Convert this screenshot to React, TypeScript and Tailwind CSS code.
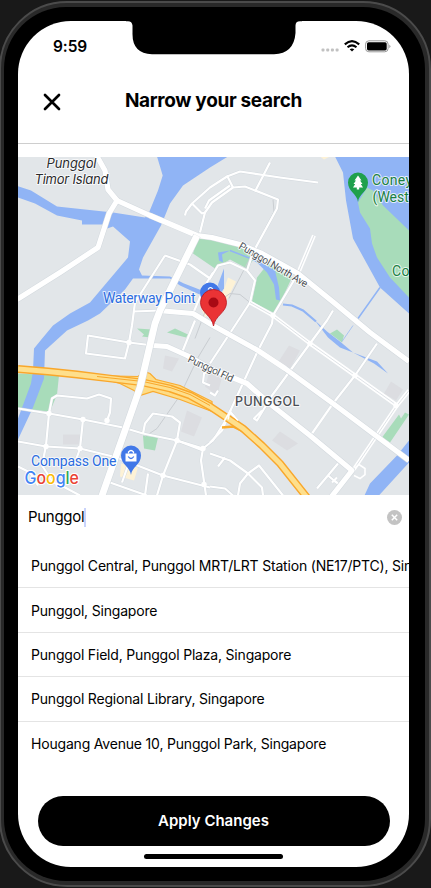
import React from "react";

const WATER = "#90b4f5";
const GREEN = "#a8dcba";

const minorRoads = [
  "M165 255L190 264L210 278L218 265L230 262L247 270L255 280L250 302L273 315",
  "M165 255L135 302L132 325L129 342L125 358L86 353L88 335L129 342L153 345",
  "M133 311L160 310",
  "M185 215L186 211L192 203L210 187L227 176L240 171L280 177L318 182",
  "M192 203L202 213L205 212",
  "M200 232L205 212L212 202L233 187L245 186L278 199L277 208L253 252L247 270",
  "M227 175L233 187M270 162L255 191M205 208L209 200L230 185",
  "M298 273L273 315L272 323L258 350L235 400L230 411",
  "M250 302L235 325L210 363",
  "M193 313L205 285L213 272M195 320L182 352",
  "M333 310L327 320L310 343L272 395L257 420L254 418L262 410",
  "M377 343L355 375L333 403L312 433",
  "M18 408L49 413L83 419L123 427L143 433L177 440L203 448L213 440L230 413",
  "M49 413L52 398L57 395L87 398L99 394L111 398L110 412L107 420",
  "M49 413L46 445L42 465L53 482L65 487L80 495",
  "M18 441L46 446L80 448L117 457L163 475L210 487",
  "M83 419L80 448L74 465",
  "M143 433L145 423L153 413L172 416L180 422L177 440L163 475L157 495",
  "M203 448L201 460L206 495M177 440L203 450",
  "M148 473L145 495M110 482L147 495M122 482L128 465L134 462",
  "M210 442L222 430L230 411L240 424",
  "M210 453L230 460L248 473L262 487L263 495",
  "M248 473L259 465L283 495M248 473L240 483L238 495",
  "M210 486L225 488L233 495M225 457L218 466",
  "M338 463L317 488M328 475L334 480L338 483M332 482L337 477",
  "M18 466L30 472L38 485M210 385L203 382L204 373L210 369",
  "M210 392L215 395L218 390",
];

function Line({ d, c, w }: { d: string; c: string; w: number }) {
  return <path d={d} fill="none" stroke={c} strokeWidth={w} strokeLinejoin="round" />;
}

function Pin({ x, y, color }: { x: number; y: number; color: string }) {
  return (
    <path
      transform={`translate(${x} ${y})`}
      d="M0 18.500C-1 10-10 8-10-1A10 10 0 0 1 10-1C10 8 1 10 0 18.500Z"
      fill={color}
    />
  );
}

function MapView() {
  const highway =
    "M18 368.500L48 371L77 374L110 378L143 382L170 388L190 395L210 406L243 428L262 445L280 463L307 497";
  const ave = "M117 200L150 215L197 235L212 237L240 244L262 253L298 273L335 303L370 332L409 361";
  const main = "M197 235L160 310L155 323L148 353L140 387L125 430L101 498";
  const central = "M158 310L193 313L213 325L258 350L285 368L333 403L409 460";
  const field = "M153 345L167 346L187 355L210 368L247 383L272 405L310 435L352 470L330 498";
  const timor = "M17 299L60 272L98 247L109 213L117 200L108 189L105 170L96 154";
  const labelHalo = {
    stroke: "#fff",
    strokeOpacity: 0.75,
    strokeWidth: 2,
    paintOrder: "stroke" as const,
    strokeLinejoin: "round" as const,
  };
  return (
    <svg
      viewBox="18 156.500 391 338"
      className="block h-[338px] w-full shrink-0 font-[Roboto,'Liberation_Sans',sans-serif]"
    >
      <rect x="18" y="156" width="391" height="340" fill="#e2e6e9" />
      <g fill="#dcdde1">
        <path d="M289 345L300 350L290 368L278 362ZM280 431L298 443L287 450L272 440ZM391 381L403 389L396 400L384 393Z" />
        <path d="M63 434L81 434V444L63 444ZM187 410L202 417L194 436L181 431ZM165 355L179 358L172 371L163 368ZM210 370L222 377L217 395L205 386Z" />
      </g>
      <g fill={GREEN}>
        <path d="M18 373L59 375L57 394L50 411L18 408Z" />
        <path d="M198 237L237 243L255 257L247 268L230 259L215 268L193 253Z" />
        <path d="M268 263L292 277L275 313L252 301L257 277Z" />
        <path d="M330 333L337 329L344 335L342 342ZM382 437L399 414L401 418L405 412L409 414L390 442Z" />
        <path d="M137 328L152 329L150 337L142 336L144 334ZM167 332L175 328L188 334L186 337ZM143 435L158 437L155 450L144 448Z" />
      </g>
      <g fill={WATER}>
        <path d="M18 185.700L31 190L57 206L113 212L145 217L149 212L158 190L162.700 175L157 156L228 156L210 167L183 185L170 203L161 225L143 257L139 269L142 275L170 276L184 283L202 290L204 296L180 285L170 278L133 278L125 289L100 313L88 320L67 330L45 350L44 378L33 407L18 439L18 418L31 383L33 370L34 348L43 337L53 325L70 313L90 302L128 257L130 241L113 226L107 228L103 224L82 224L82 220L57 215L35 203L18 197Z" />
        <path d="M335 156L343 172L346 200L353 238L380 287L409 313V156Z" />
        <path d="M218 252L230 250L222 254L223 262L219 260ZM250 255L275 270L279 287L280 300L276 299L274 284L267 272Z" />
        <path d="M315 320L327 331L340 341L353 352L340 347L328 337ZM353 352L377 361L388 373L374 363Z" />
        <path d="M409 440L397 455L370 483L364 496H378L409 462Z" />
        <path d="M224 268L224 288L219 295L218 284Z" />
      </g>
      <path
        d="M358 202L360 212L370 228L372 243L377 257L390 277L409 297V230L383 205L373 190L367 187Z"
        fill={GREEN}
      />
      <g fill="none" stroke={WATER} strokeWidth="1.500">
        <path d="M380 287L358 318M230 250L253 259L275 271" />
        <path d="M283 304L292 305L303 310L316 321" strokeWidth="2.200" />
        <path d="M353 325L342 341" strokeWidth=".7" />
      </g>
      <path d="M228 277L236 281L225 303L221 297ZM320 156L330 156L324 159ZM201 307L212 310L205 317ZM121 463L138 467L134 480L120 476Z" fill="#fdf2d6" />
      <path
        d="M273 199L274 211L253 252L229 298M220 300L230 293L240 294L250 302M210 337L198 357L180 395L157 428L145 436M210 298L195 338"
        fill="none"
        stroke="#c9cdd1"
        strokeWidth="1"
      />

      {minorRoads.map((d) => (
        <Line key={`edge-${d}`} d={d} c="#d3d9de" w={3} />
      ))}
      {minorRoads.map((d) => (
        <Line key={d} d={d} c="#fff" w={2.2} />
      ))}
      {["M273 315L310 343L355 375L397 405", "M409 390L397 405L353 470", "M314 235L298 273", "M250 302L273 315"].map((d) => (
        <g key={d}>
          <Line d={d} c="#fff" w={4} />
          <Line d={d} c="#d6dbe0" w={0.8} />
        </g>
      ))}
      <path d="M354 468L359 464L365 468L365 474L360 478L354 475" fill="none" stroke="#fff" strokeWidth="1.600" />
      <g fill="#fff">
        {[[310, 343], [355, 375], [396, 405], [273, 315], [49, 413], [46, 446], [80, 448], [177, 440], [203, 448], [163, 475], [129, 342], [83, 419], [107, 420], [204, 484]].map(
          ([x, y]) => (
            <circle key={`${x}-${y}`} cx={x} cy={y} r="2.700" />
          ),
        )}
      </g>

      {[timor, ave, central, field].map((d) => (
        <Line key={`edge-${d}`} d={d} c="#d3d9de" w={6.2} />
      ))}
      {[timor, ave, central, field].map((d) => (
        <Line key={d} d={d} c="#fff" w={5.2} />
      ))}

      <path
        d="M92 375L138 376L144 371L150 373L156 379L180 385L212 401L212 411L180 399L153 391L140 395L134 390L120 383Z"
        fill="#fedc86"
        stroke="#f9ab2e"
        strokeWidth="1.200"
      />
      <path d="M222 427L233 426L245 432M241 424L247 430" fill="none" stroke="#f9ab2e" strokeWidth="2.500" />
      <Line d={highway} c="#f9a72b" w={7.8} />
      <Line d={highway} c="#fedf8c" w={5} />
      <path d="M97 376L143 381L170 387L190 394L210 405" fill="none" stroke="#f9a72b" strokeWidth="1" />
      <path d="M228 419L230 411L238 420M224 421L231 409" fill="none" stroke="#fff" strokeWidth="1.500" />
      <Line d={main} c="#d3d9de" w={7.8} />
      <Line d={main} c="#fff" w={6.8} />

      <g fontFamily="Inter, sans-serif">
        <g {...labelHalo} fill="#2b2c2e" fontSize="13" fontStyle="italic" textAnchor="middle">
          <text x="71.500" y="167" textLength="50">Punggol</text>
          <text x="71.500" y="183.500" textLength="74">Timor Island</text>
        </g>
        <text x="235" y="405.500" fill="#4b4f54" fontSize="12.500" fontWeight="500" textLength="64.500" {...labelHalo}>
          PUNGGOL
        </text>
      </g>
      <g fill="#4c5054" fontSize="10.300" {...labelHalo}>
        <text transform="translate(238 247.500) rotate(30.500)" textLength="78">Punggol North Ave</text>
        <text transform="translate(187 361) rotate(25)" textLength="49">Punggol Fld</text>
      </g>
      <g fill="#1a7f43" fontSize="14" {...labelHalo}>
        <text x="372" y="184" textLength="40">Coney</text>
        <text x="372.500" y="201">(West</text>
        <text x="392" y="275" textLength="40">Coney</text>
      </g>
      <g fill="#2b6de0" fontSize="14" {...labelHalo}>
        <text x="103" y="302.500" textLength="92.500">Waterway Point</text>
        <text x="31" y="465.500" textLength="85.500">Compass One</text>
      </g>

      <Pin x={358} y={183} color="#1fa04c" />
      <path d="M358 176L361.500 181H360L362.500 184.500H360.800L363 188H359.200V190H356.800V188H353L355.200 184.500H353.500L356 181H354.500Z" transform="translate(0 -1)" fill="#fff" />
      <Pin x={210} y={293} color="#4178e8" />
      <path d="M208 289Q210.500 285 213 289" fill="none" stroke="#fff" strokeWidth="1.200" />
      <Pin x={131} y={456} color="#4178e8" />
      <path d="M125.500 453H136.500V461H125.500Z" fill="#fff" />
      <path d="M128.500 453V451.500Q131 448.500 133.500 451.500V453" fill="none" stroke="#fff" strokeWidth="1.300" />
      <path d="M128.200 456Q131 460 133.800 456" fill="none" stroke="#4178e8" strokeWidth="1.300" />

      <path
        d="M213.500 325.500C212 315 200.500 312 200.500 302A13 13 0 0 1 226.500 302C226.500 312 215 315 213.500 325.500Z"
        fill="#ea3335"
        stroke="#b91720"
        strokeWidth=".8"
      />
      <circle cx="213.500" cy="302" r="5" fill="#a90a14" />

      <text
        x="24.500"
        y="483.500"
        fontFamily="Inter, sans-serif"
        fontSize="17"
        fontWeight="500"
        textLength="54.500"
        lengthAdjust="spacingAndGlyphs"
        stroke="#fff"
        strokeWidth="2"
        paintOrder="stroke"
      >
        <tspan fill="#4285f4">G</tspan><tspan fill="#ea4335">o</tspan><tspan fill="#fbbc05">o</tspan><tspan fill="#4285f4">g</tspan><tspan fill="#34a853">l</tspan><tspan fill="#ea4335">e</tspan>
      </text>
    </svg>
  );
}

function StatusBar() {
  return (
    <div className="relative flex h-[50px] shrink-0 items-center justify-between pr-[18px] pl-[35px]">
      <svg viewBox="0 0 176 34" className="absolute top-0 left-[107.500px] h-[34px] w-[176px]">
        <path d="M0 0H176V.2H174Q169.500 .2 169.500 4.500V12Q168 32.500 148 33.300H26Q6 32.500 6.500 12V4.500Q6 .2 2 .2H0Z" fill="#000" />
      </svg>
      <span className="mt-px text-[15.500px] leading-5 font-semibold tracking-[-0.1px]">9:59</span>
      <div className="flex items-center">
        <svg viewBox="0 0 18 4" className="mt-[7px] mr-[5px] h-1 w-[18px]" fill="#c1c1c1">
          <rect x=".5" y=".5" width="3" height="3" rx="1" />
          <rect x="5.200" y=".5" width="3" height="3" rx="1" />
          <rect x="9.900" y=".5" width="3" height="3" rx="1" />
          <rect x="14.600" y=".5" width="3" height="3" rx="1" />
        </svg>
        <svg viewBox="0 0 16 12" className="mr-[5px] h-3 w-4" fill="none" stroke="#000" strokeWidth="2.100">
          <path d="M.8 4.400Q8-2 15.200 4.400M3.500 7.300Q8 3.600 12.500 7.300" />
          <path d="M8 11.600L5.700 9.300Q8 7.500 10.300 9.300Z" fill="#000" stroke="none" />
        </svg>
        <svg viewBox="0 0 26 13" className="h-[13px] w-[26px]">
          <rect x=".6" y=".8" width="22.500" height="11" rx="3.300" fill="none" stroke="#999" />
          <rect x="2" y="2.200" width="19.700" height="8.200" rx="1.600" />
          <path d="M24.300 4.500Q26.500 6.300 24.300 8.200Z" fill="#999" />
        </svg>
      </div>
    </div>
  );
}

const places = [
  "Punggol Central, Punggol MRT/LRT Station (NE17/PTC), Singapore",
  "Punggol, Singapore",
  "Punggol Field, Punggol Plaza, Singapore",
  "Punggol Regional Library, Singapore",
  "Hougang Avenue 10, Punggol Park, Singapore",
];

export default function App() {
  return (
    <div className="h-[888px] w-[431px] overflow-hidden bg-[#191919] pt-px font-[Inter,'Liberation_Sans',sans-serif] text-black">
      <div className="-ml-px h-[886px] w-[432px] rounded-[68px] border-2 border-[#4b4b4b] bg-[#292929] pt-[4px] pl-[3px]">
        <div className="h-[874px] w-[421px] rounded-[62px] bg-black pt-[14px] pl-[14px]">
          <div className="flex h-[846px] w-[391px] flex-col overflow-hidden rounded-[53px] bg-white">
            <StatusBar />
            <header className="relative flex h-[73px] shrink-0 items-center justify-center border-b border-[#cecece] pb-[12px]">
              <svg viewBox="0 0 18 18" className="absolute top-[22px] left-[25px] size-[18px]">
                <path d="M2 2L16 16M16 2L2 16" stroke="#000" strokeWidth="2.700" strokeLinecap="round" />
              </svg>
              <h1 className="text-[19px] leading-6 font-bold tracking-[-0.33px]">Narrow your search</h1>
            </header>
            <div className="h-[12.500px] shrink-0" />
            <MapView />
            <div className="flex h-[49.500px] shrink-0 items-center justify-between pr-[7px] pl-[10px]">
              <div className="flex items-center pb-[4px] text-[15px] leading-5 tracking-[-0.3px]">
                Punggol
                <span className="h-[19px] w-[2px] bg-[#c9d3fb]" />
              </div>
              <svg viewBox="0 0 15 15" className="mb-[4px] size-[15px]">
                <circle cx="7.500" cy="7.500" r="7.500" fill="#c3c3c3" />
                <path d="M4.800 4.800L10.200 10.200M10.200 4.800L4.800 10.200" stroke="#fff" strokeWidth="1.500" />
              </svg>
            </div>
            <ul className="shrink-0">
              {places.map((place) => (
                <li
                  key={place}
                  className="flex h-[44.400px] items-center overflow-hidden border-b border-[#e4e4e4] pl-[13px] text-[14px] tracking-[-0.19px] whitespace-nowrap last:border-b-0"
                >
                  {place}
                </li>
              ))}
            </ul>
            <div className="flex flex-1 flex-col items-center justify-end pb-[8px]">
              <button className="h-[50px] w-[352px] rounded-full bg-black text-[15px] font-semibold text-white">
                Apply Changes
              </button>
              <div className="mt-[8px] h-[5px] w-[139px] rounded-full bg-black" />
            </div>
          </div>
        </div>
      </div>
    </div>
  );
}
